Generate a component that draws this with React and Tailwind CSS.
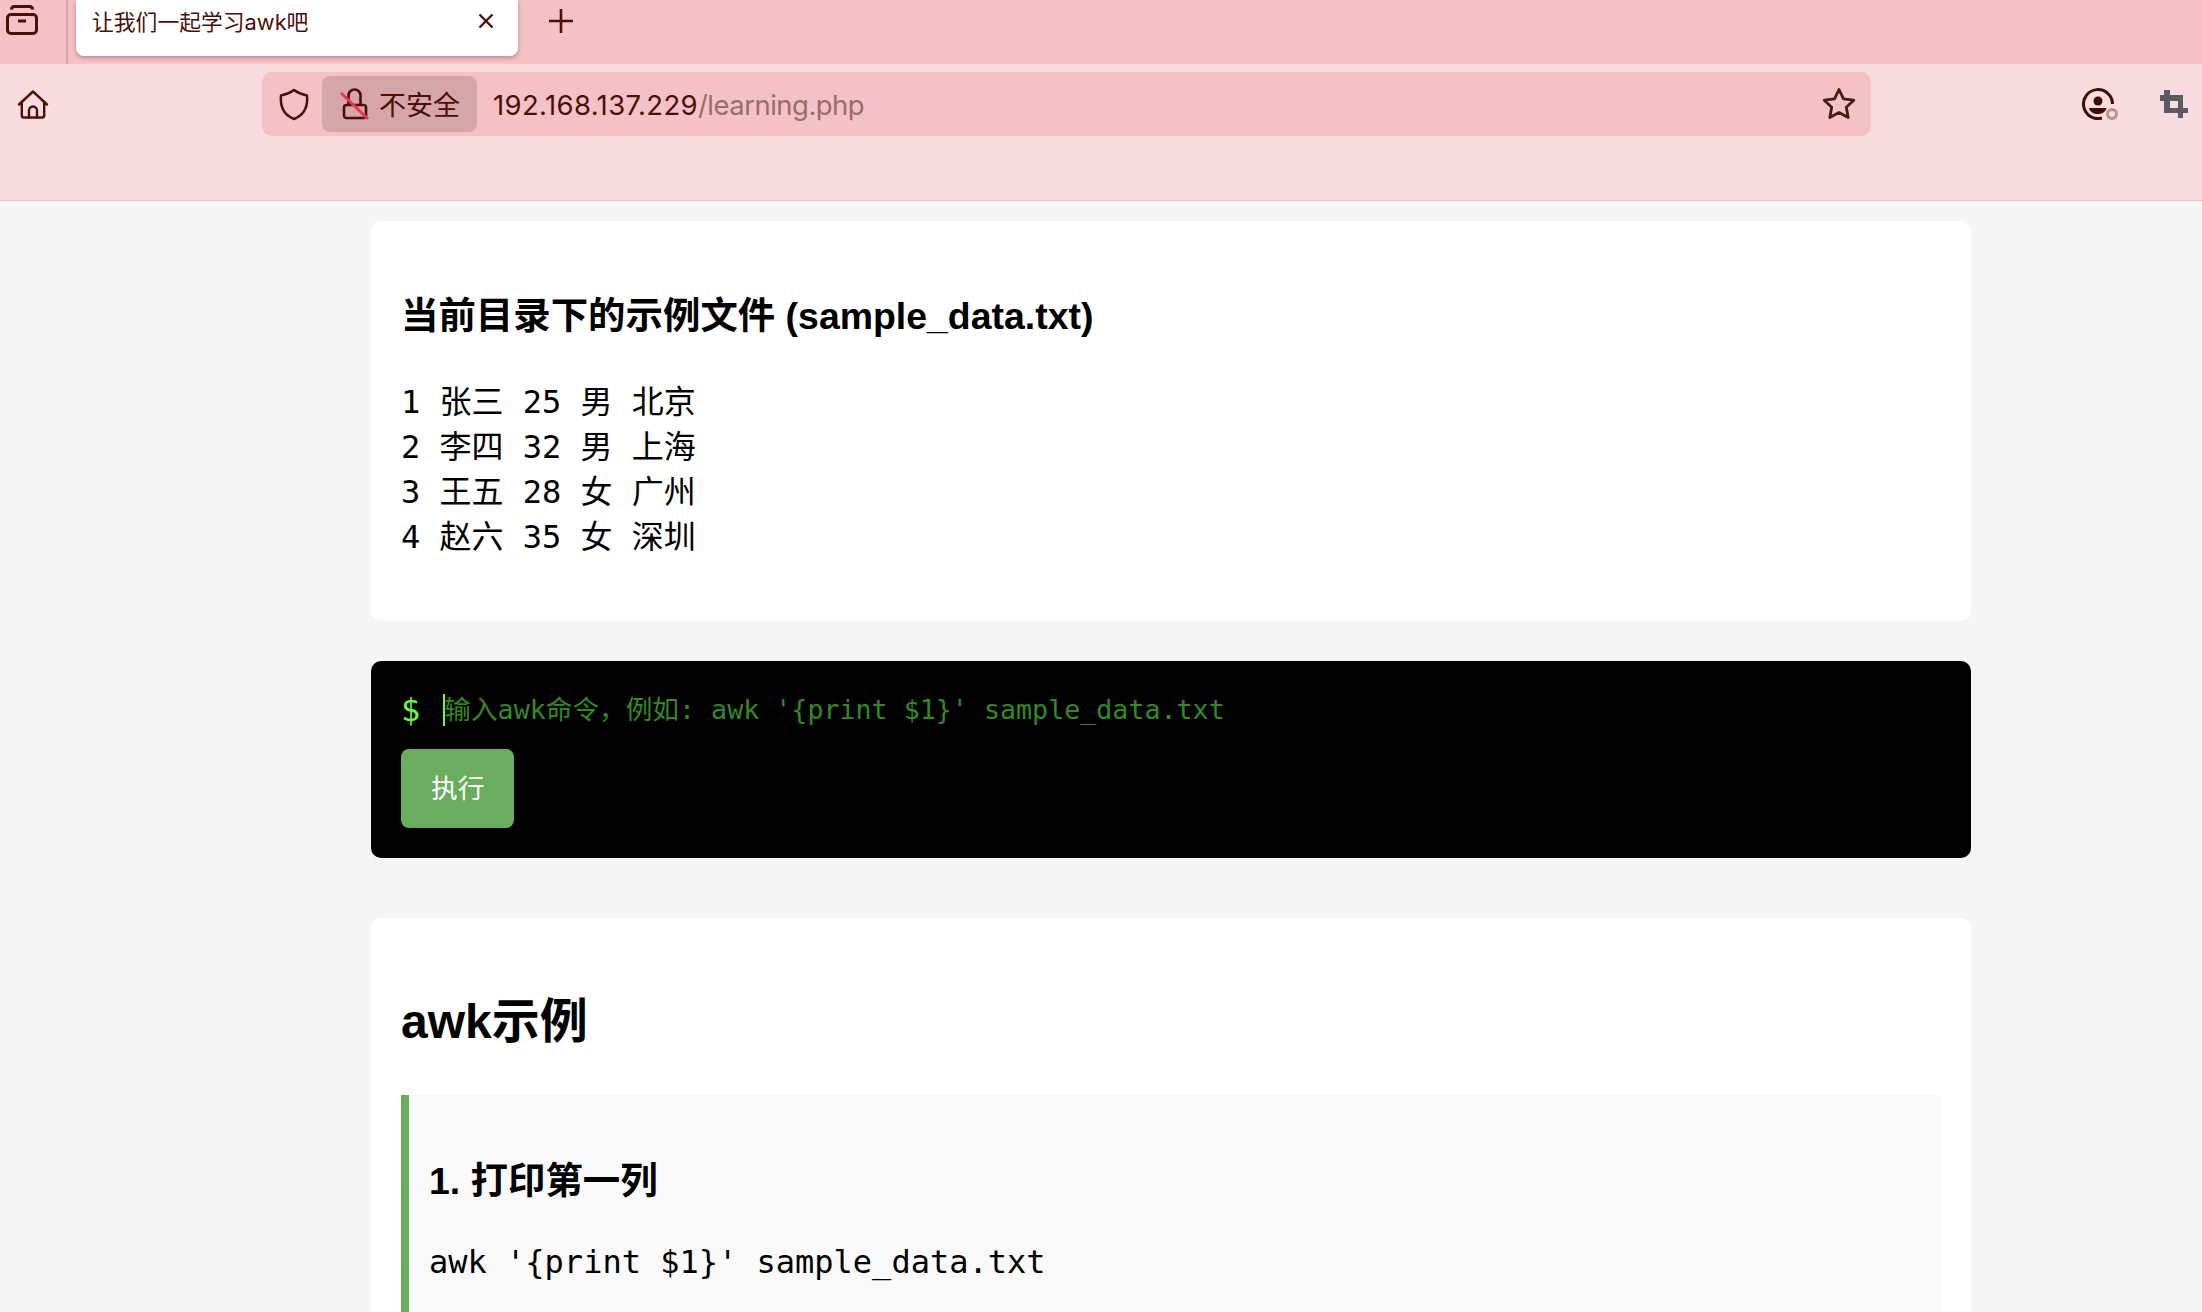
import React from 'react';

const sans = "font-['Liberation_Sans','Noto_Sans_CJK_SC',sans-serif]";
const mono = "font-['DejaVu_Sans_Mono','Noto_Sans_CJK_SC',monospace]";

const rows = [
  '1 张三 25 男 北京',
  '2 李四 32 男 上海',
  '3 王五 28 女 广州',
  '4 赵六 35 女 深圳',
];

const TabStrip = () => (
  <div className="flex h-16 shrink-0 bg-[#f4c2c6] text-[#4a0f0a]">
    <div className="flex h-16 w-[68px] items-start border-r-2 border-[#d9a3a8] pl-[5px] pt-[4px]">
      <svg width="34" height="34" viewBox="0 0 34 34" fill="none" stroke="currentColor" strokeWidth="3">
        <path d="M6.500 5.500C6.500 3.500 7.500 2.500 9.500 2.500h15c2 0 3 1 3 3" />
        <rect x="2.500" y="10.500" width="29" height="19" rx="3.500" />
        <path d="M13 17h8" />
      </svg>
    </div>
    <div className="ml-[8px] flex h-14 w-[442px] items-center justify-between rounded-b-lg bg-white pb-[12px] pl-4 pr-[23px] shadow-[0_2px_4px_rgba(90,30,30,0.35)]">
      <span className="font-['Inter','Noto_Sans_CJK_SC',sans-serif] text-[21.8px] leading-[28px]">让我们一起学习awk吧</span>
      <svg width="18" height="18" viewBox="0 0 18 18" stroke="currentColor" strokeWidth="2.4" className="-mt-[2px]">
        <path d="M2.500 2.500l13 13M15.500 2.500l-13 13" />
      </svg>
    </div>
    <svg width="26" height="26" viewBox="0 0 26 26" stroke="currentColor" strokeWidth="2.6" className="ml-[30px] mt-[8px]">
      <path d="M13 1v24M1 13h24" />
    </svg>
  </div>
);

const Toolbar = () => (
  <div className="flex h-[137px] shrink-0 items-start border-b border-[#f4c2c6] bg-[#f9dcdf] pt-2 text-[#4a0f0a]">
    <svg width="32" height="32" viewBox="0 0 32 32" fill="none" stroke="currentColor" strokeWidth="2.4" strokeLinejoin="round" strokeLinecap="round" className="ml-[17px] mt-[16px] shrink-0">
      <path d="M2 16.500 16 3.500l14 13M4.800 14v13.500a2 2 0 0 0 2 2h18.400a2 2 0 0 0 2-2V14" />
      <path d="M12 29.500V22.500a4 4 0 0 1 8 0v7" />
    </svg>
    <div className="ml-[213px] flex h-16 w-[1609px] shrink-0 items-center rounded-[10px] bg-[#f4c2c6] pl-[17px] pr-[15px]">
      <svg width="30" height="33" viewBox="0 0 30 33" fill="none" stroke="currentColor" strokeWidth="2.5" strokeLinejoin="round" className="shrink-0">
        <path d="M15 2C19 5 23 6.500 28 7.500C29 18 25 27 15 31C5 27 1 18 2 7.500C7 6.500 11 5 15 2z" />
      </svg>
      <div className="ml-[13px] flex h-14 w-[155px] shrink-0 items-center rounded-lg bg-[#d5a5a8] pl-[18px]">
        <svg width="30" height="34" viewBox="0 0 30 34" fill="none" className="shrink-0">
          <path d="M8.500 18V8.500a6 6 0 0 1 12 0V18M6.500 18h17a2.500 2.500 0 0 1 2.500 2.500v8a2.500 2.500 0 0 1-2.500 2.500h-17A2.500 2.500 0 0 1 4 28.500v-8A2.500 2.500 0 0 1 6.500 18z" stroke="#4a0f0a" strokeWidth="2.6" />
          <path d="M1 6l27 26" stroke="#e8365d" strokeWidth="3" />
        </svg>
        <span className="ml-[9px] font-['Noto_Sans_CJK_SC',sans-serif] text-[27px] leading-[34px]">不安全</span>
      </div>
      <div className="ml-[16px] mt-[2px] font-['Inter',sans-serif] text-[27.5px] leading-[36px] tracking-[0.36px]">
        192.168.137.229<span className="tracking-[-0.52px] text-[#9c6b6c]">/learning.php</span>
      </div>
      <svg width="34" height="34" viewBox="0 0 34 34" fill="none" stroke="#4a1a14" strokeWidth="2.8" strokeLinejoin="round" className="ml-auto shrink-0">
        <path d="M17 2.500l4.500 9.300 10.300 1.400-7.500 7.100 1.900 10.200L17 25.600 7.800 30.500l1.900-10.200-7.500-7.100 10.300-1.400z" />
      </svg>
    </div>
    <div className="relative ml-[211px] mt-[16px] h-8 w-8 shrink-0">
      <svg width="32" height="32" viewBox="0 0 32 32" fill="none">
        <path d="M30.500 16A14.500 14.500 0 1 0 20 30" stroke="#3f0d08" strokeWidth="3" />
        <circle cx="16" cy="13" r="4.500" fill="#3f0d08" />
        <path d="M7 20h17.500c-1 4-4.500 6-8.700 6s-7.800-2-8.800-6z" fill="#3f0d08" />
      </svg>
      <span className="absolute left-[24px] top-[20px] h-3 w-3 rounded-full border-[3px] border-[#bb9090] bg-[#f9dcdf]" />
    </div>
    <svg width="28" height="28" viewBox="0 0 28 28" fill="#5b5b66" className="ml-[46px] mt-[18px] shrink-0">
      <path d="M4 0h6v5h13v13h5v5h-5v5h-5v-5H4V11H0V5h4zM10 11v7h8v-7z" fillRule="evenodd" />
    </svg>
  </div>
);

export default function App() {
  return (
    <div className={`flex h-[1312px] flex-col overflow-hidden bg-[#f5f5f5] text-black ${sans}`}>
      <TabStrip />
      <Toolbar />
      <div className="ml-[371px] w-[1600px] pt-5">
        {/* sample file */}
        <section className="rounded-[10px] bg-white p-[30px]">
          <h3 className="mb-[38px] mt-[39px] text-[37.44px] font-bold leading-[52px]">当前目录下的示例文件 (sample_data.txt)</h3>
          <pre className={`mb-[31px] text-[32px] leading-[45px] ${mono}`}>
            {rows.join('\n')}
          </pre>
        </section>

        {/* terminal */}
        <section className="mt-10 rounded-[10px] bg-black p-[30px]">
          <div className={`flex h-[58px] items-start text-[26.67px] ${mono}`}>
            <span className="text-[32px] leading-[38px] text-[#66ff44]">$</span>
            <div className="ml-[23px] mt-[3px] h-8 w-[2px] bg-[#66ff44]" />
            <span className="-ml-px mt-[2px] whitespace-pre leading-[34px] text-[#338a22]">输入awk命令，例如: awk '{'{'}print $1{'}'}' sample_data.txt</span>
          </div>
          <button className="h-[79px] rounded-lg bg-[#6aad5f] px-[30px] text-[26.67px] text-white">执行</button>
        </section>

        {/* examples */}
        <section className="mt-[60px] rounded-[10px] bg-white p-[30px]">
          <h2 className="mb-10 mt-10 text-[48px] font-bold leading-[67px]">awk示例</h2>
          <div className="border-l-8 border-[#6aad5f] bg-[#f9f9f9] px-5 pb-[60px] pt-5">
            <h3 className="mb-[33px] mt-10 text-[37.44px] font-bold leading-[52px]">1. 打印第一列</h3>
            <pre className={`text-[32px] leading-[45px] ${mono}`}>awk '{'{'}print $1{'}'}' sample_data.txt</pre>
          </div>
        </section>
      </div>
    </div>
  );
}
